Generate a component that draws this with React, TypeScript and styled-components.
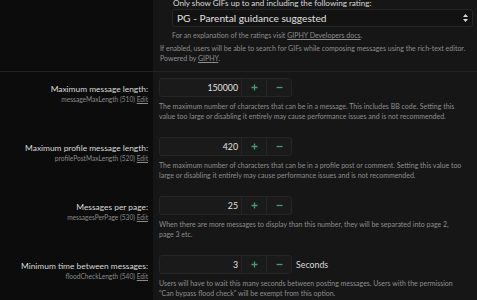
import React from "react";
import styled, { createGlobalStyle } from "styled-components";

const Global = createGlobalStyle`
  html, body { margin: 0; padding: 0; background: #0c0c0c; overflow: hidden; }
  body { font-family: Lato, "Noto Sans", sans-serif; }
`;

const Page = styled.div`
  display: flex;
  flex-direction: column;
  margin-top: -3px;
  width: 477px;
`;

const Row = styled.div<{ $top?: boolean }>`
  display: grid;
  grid-template-columns: 153px 1fr;
  border-bottom: ${(p) => (p.$top ? "1px solid #242424" : "none")};
`;

const LabelCell = styled.div`
  background: #0c0c0c;
  padding: 11px 5px 0 0;
  text-align: right;
`;

const Label = styled.div`
  font-size: 8.4px;
  line-height: 12px;
  color: #dadada;
`;

const SubLabel = styled.div`
  font-size: 6.6px;
  line-height: 9px;
  color: #8a8a8a;
  a { color: #8a8a8a; text-decoration: underline; }
`;

const ContentCell = styled.div<{ $top?: boolean }>`
  background: #161616;
  padding: ${(p) => (p.$top ? "0 4px 8px 7px" : "6px 4px 10px 6px")};
`;

const Nested = styled.div`
  padding-left: 12px;
`;

const OptionLabel = styled.div`
  font-size: 8.1px;
  line-height: 12px;
  color: #dadada;
  padding-left: 1px;
`;

const Select = styled.div`
  display: flex;
  align-items: center;
  justify-content: space-between;
  height: 16px;
  border: 1px solid #262626;
  border-radius: 3px;
  background: #121212;
  padding: 0 4px;
  font-size: 10.2px;
  color: #e0e0e0;
`;

const Arrows = styled.svg`
  width: 5px;
  height: 8px;
`;

const Explain = styled.div`
  margin-top: 3px;
  font-size: 7px;
  line-height: 10px;
  color: #8e8e8e;
  a { color: #8e8e8e; text-decoration: underline; }
`;

const Hint = styled.div<{ $mt?: number; $pr?: number }>`
  margin-top: ${(p) => p.$mt ?? 4}px;
  font-size: 7px;
  line-height: 10px;
  color: #8e8e8e;
  padding-right: ${(p) => p.$pr ?? 10}px;
  a { color: #8e8e8e; text-decoration: underline; }
`;

const Controls = styled.div`
  display: flex;
  align-items: center;
  height: 19px;
`;

const Spinbox = styled.div`
  display: flex;
  height: 19px;
  border: 1px solid #252525;
  border-radius: 3px;
  box-sizing: border-box;
  background: #1a1a1a;
`;

const NumInput = styled.div`
  width: 81px;
  box-sizing: border-box;
  padding-right: 3px;
  display: flex;
  align-items: center;
  justify-content: flex-end;
  font-size: 8.8px;
  color: #e2e2e2;
`;

const StepButton = styled.div`
  width: 24px;
  display: flex;
  align-items: center;
  justify-content: center;
  border-left: 1px solid #252525;
`;

const Units = styled.span`
  margin-left: 4px;
  font-size: 8.8px;
  color: #dadada;
`;

const Plus = () => (
  <svg width="7" height="7" viewBox="0 0 7 7">
    <path d="M3.5 0.5v6M0.5 3.5h6" stroke="#3f9f72" strokeWidth="1.3" />
  </svg>
);
const Minus = () => (
  <svg width="7" height="7" viewBox="0 0 7 7">
    <path d="M0.5 3.5h6" stroke="#3f9f72" strokeWidth="1.3" />
  </svg>
);

type Opt = {
  label: string;
  key: string;
  id: number;
  value: string;
  units?: string;
  hint: string;
};

const options: Opt[] = [
  {
    label: "Maximum message length:",
    key: "messageMaxLength",
    id: 510,
    value: "150000",
    hint:
      "The maximum number of characters that can be in a message. This includes BB code. Setting this value too large or disabling it entirely may cause performance issues and is not recommended.",
  },
  {
    label: "Maximum profile message length:",
    key: "profilePostMaxLength",
    id: 520,
    value: "420",
    hint:
      "The maximum number of characters that can be in a profile post or comment. Setting this value too large or disabling it entirely may cause performance issues and is not recommended.",
  },
  {
    label: "Messages per page:",
    key: "messagesPerPage",
    id: 530,
    value: "25",
    hint:
      "When there are more messages to display than this number, they will be separated into page 2, page 3 etc.",
  },
  {
    label: "Minimum time between messages:",
    key: "floodCheckLength",
    id: 540,
    value: "3",
    units: "Seconds",
    hint:
      'Users will have to wait this many seconds between posting messages. Users with the permission "Can bypass flood check" will be exempt from this option.',
  },
];

export default function App() {
  return (
    <>
      <Global />
      <Page>
        <Row $top>
          <LabelCell />
          <ContentCell $top>
            <Nested>
              <OptionLabel>Only show GIFs up to and including the following rating:</OptionLabel>
              <Select>
                <span>PG - Parental guidance suggested</span>
                <Arrows viewBox="0 0 5 8">
                  <path d="M2.5 0L5 3H0z M2.5 8L0 5h5z" fill="#d8d8d8" />
                </Arrows>
              </Select>
              <Explain>
                For an explanation of the ratings visit <a>GIPHY Developers docs</a>.
              </Explain>
            </Nested>
            <Hint $mt={3} $pr={2}>
              If enabled, users will be able to search for GIFs while composing messages using the rich-text editor. Powered by <a>GIPHY</a>.
            </Hint>
          </ContentCell>
        </Row>
        {options.map((o) => (
          <Row key={o.key}>
            <LabelCell>
              <Label>{o.label}</Label>
              <SubLabel>
                {o.key} ({o.id}) <a>Edit</a>
              </SubLabel>
            </LabelCell>
            <ContentCell>
              <Controls>
                <Spinbox>
                  <NumInput>{o.value}</NumInput>
                  <StepButton>
                    <Plus />
                  </StepButton>
                  <StepButton>
                    <Minus />
                  </StepButton>
                </Spinbox>
                {o.units && <Units>{o.units}</Units>}
              </Controls>
              <Hint>{o.hint}</Hint>
            </ContentCell>
          </Row>
        ))}
      </Page>
    </>
  );
}
